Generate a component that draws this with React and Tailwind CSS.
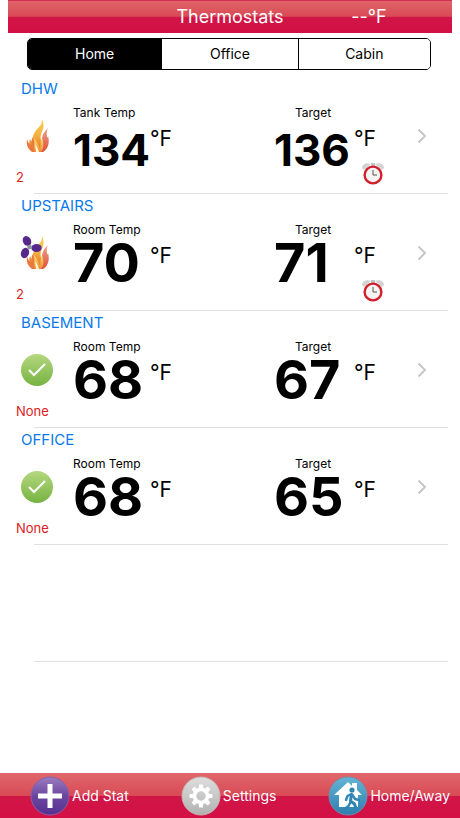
import React, { useState } from 'react';

const LOCATIONS = ['Home', 'Office', 'Cabin'];

const STATS = [
    { id: 1, name: 'DHW', label: 'Tank Temp', temp: 134, target: 136, status: 'heat', zones: '2', scheduled: true },
    { id: 2, name: 'UPSTAIRS', label: 'Room Temp', temp: 70, target: 71, status: 'heat-fan', zones: '2', scheduled: true },
    { id: 3, name: 'BASEMENT', label: 'Room Temp', temp: 68, target: 67, status: 'ok', zones: 'None', scheduled: false },
    { id: 4, name: 'OFFICE', label: 'Room Temp', temp: 68, target: 65, status: 'ok', zones: 'None', scheduled: false },
];

const Flame = () => (
    <>
        <defs>
            <linearGradient id="flameBack" x1="0" y1="0" x2="0" y2="1">
                <stop offset="0" stopColor="#f3d45c" />
                <stop offset="0.5" stopColor="#f5b03c" />
                <stop offset="1" stopColor="#e2603a" />
            </linearGradient>
            <linearGradient id="flameSide" x1="0" y1="0" x2="0" y2="1">
                <stop offset="0" stopColor="#f0a28c" />
                <stop offset="1" stopColor="#dd4f35" />
            </linearGradient>
            <linearGradient id="flameFront" x1="0" y1="0" x2="0" y2="1">
                <stop offset="0" stopColor="#fbe36a" />
                <stop offset="1" stopColor="#f08a35" />
            </linearGradient>
        </defs>
        <path d="M17 36c-3-3-5-7-3-13 1 2 2 3 3 3-1-7 2-11 6-15 2-2 3-4 3-8 3 6 1 11-1 15-1 4 0 7 1 10l-1 8z" fill="url(#flameBack)" />
        <path d="M22 36c5-4 5-8 4-13 0-4 2-7 6-11-2 4-1 6-1 9 0 1 1 0 1-1 2 7 0 13-5 16z" fill="url(#flameSide)" />
        <path d="M16 36c-4-3-6-7-5-13 1 4 3 6 5 7 0-5-1-6 1-9 0 5 3 8 5 12l2 3z" fill="#e9793f" />
        <path d="M19 36c-2-5 0-9-1-14 3 4 5 7 6 11 1-4 0-7 2-11 2 6 2 11-1 14z" fill="url(#flameFront)" />
        <path d="M20 36c0-3-1-6-1-8 2 2 3 5 4 8z" fill="#fff6d5" />
    </>
);

const StatusIcon = ({ status }) => {
    if (status === 'ok') {
        return (
            <svg viewBox="0 0 40 40" className="w-10 h-10" role="img" aria-label="Idle">
                <defs>
                    <linearGradient id="okFill" x1="0" y1="0" x2="0" y2="1">
                        <stop offset="0" stopColor="#b5d77f" />
                        <stop offset="1" stopColor="#76b342" />
                    </linearGradient>
                </defs>
                <circle cx="21" cy="20" r="16" fill="url(#okFill)" />
                <path d="M13 20l5 5 11-11" fill="none" stroke="#fff" strokeWidth="2" />
            </svg>
        );
    }
    return (
        <svg viewBox="0 0 40 40" className="w-10 h-10" role="img" aria-label="Heating">
            <Flame />
            {status === 'heat-fan' && (
                <>
                    <g fill="#56288c">
                        <ellipse cx="11" cy="8" rx="4" ry="5.200" transform="rotate(-28 11 8)" />
                        <ellipse cx="20.500" cy="15" rx="5.200" ry="4" />
                        <ellipse cx="9" cy="20" rx="4" ry="5.400" transform="rotate(20 9 20)" />
                    </g>
                    <circle cx="13.500" cy="14" r="2.300" fill="#8a929c" />
                </>
            )}
        </svg>
    );
};

const AlarmClock = () => (
    <svg viewBox="0 0 22 22" className="w-[22px] h-[22px]" role="img" aria-label="Scheduled">
        <path d="M0 5c0-4 5-6 9-4l-7 6z" fill="#d3d3d3" />
        <path d="M22 5c0-4-5-6-9-4l7 6z" fill="#d3d3d3" />
        <path d="M9 0h4v3H9z" fill="#c3c3c3" />
        <circle cx="11" cy="12" r="8.400" fill="#f6f4f2" stroke="#d0202c" strokeWidth="2.400" />
        <path d="M11 7v5h4" fill="none" stroke="#555" strokeWidth="1" />
    </svg>
);

const Chevron = () => (
    <svg viewBox="0 0 10 16" className="w-[10px] h-4" aria-hidden="true">
        <path d="M1.500 1.500L8 8l-6.500 6.500" fill="none" stroke="#c6c6c9" strokeWidth="2" />
    </svg>
);

// Three digit readings get a smaller face so they stay clear of the unit
const Reading = ({ label, value, children, target }) => (
    <div>
        <div className={`text-xs leading-4 ${target ? 'w-[78px] text-center' : ''}`}>{label}</div>
        <div className="flex">
            <div
                className={`shrink-0 font-bold ${target ? 'w-20' : 'w-[77px]'} ${value > 99 ? 'text-[44px] leading-[58px]' : 'text-[54px] leading-[50px]'}`}
            >
                {value}
            </div>
            <div className="pt-1">
                <div className="text-[21px] leading-7 font-normal">°F</div>
                {children}
            </div>
        </div>
    </div>
);

const StatRow = ({ stat }) => (
    <li className="relative h-[117px]">
        <button type="button" className="w-full h-full flex flex-col text-left">
            <h2 className="pl-[13px] text-[15px] leading-6 text-[#0a7aeb]">{stat.name}</h2>
            <div className="w-full flex pl-2 pt-1">
                <div className="w-[57px] shrink-0 pt-[11px]">
                    <StatusIcon status={stat.status} />
                    <div className="pt-[11px] text-[13px] leading-5 text-[#e02020]">{stat.zones}</div>
                </div>
                <div className="flex-1">
                    <Reading label={stat.label} value={stat.temp} />
                </div>
                <div className="w-[143px] shrink-0">
                    <Reading label="Target" value={stat.target} target>
                        {stat.scheduled && <div className="pt-[10px] pl-2"><AlarmClock /></div>}
                    </Reading>
                </div>
                <div className="w-[35px] shrink-0 pt-[23px]">
                    <Chevron />
                </div>
            </div>
        </button>
        <div className="absolute bottom-0 left-[26px] right-1 h-px bg-[#e0e0e2]" />
    </li>
);

const AddIcon = () => (
    <svg viewBox="0 0 40 40" className="w-10 h-10" aria-hidden="true">
        <defs>
            <linearGradient id="addFill" x1="0" y1="0" x2="0" y2="1">
                <stop offset="0" stopColor="#9a7cc0" />
                <stop offset="0.5" stopColor="#6b46a0" />
                <stop offset="1" stopColor="#553090" />
            </linearGradient>
        </defs>
        <circle cx="20" cy="20" r="19" fill="url(#addFill)" stroke="#8a5fa8" />
        <path d="M17.500 8h5v9.500H32v5h-9.500V32h-5v-9.500H8v-5h9.500z" fill="#fff" />
    </svg>
);

const GearIcon = () => (
    <svg viewBox="0 0 40 40" className="w-10 h-10" aria-hidden="true">
        <defs>
            <linearGradient id="gearFill" x1="0" y1="0" x2="0" y2="1">
                <stop offset="0" stopColor="#dedede" />
                <stop offset="1" stopColor="#b2b2b2" />
            </linearGradient>
        </defs>
        <circle cx="20" cy="20" r="19" fill="url(#gearFill)" stroke="#c9b4b4" />
        <g fill="#fff">
            {[0, 45, 90, 135, 180, 225, 270, 315].map(angle => (
                <path key={angle} d="M18.200 8.500h3.600l.8 6h-5.200z" transform={`rotate(${angle} 20 20)`} />
            ))}
        </g>
        <circle cx="20" cy="20" r="6.500" fill="none" stroke="#fff" strokeWidth="3.600" />
    </svg>
);

const HomeAwayIcon = () => (
    <svg viewBox="0 0 40 40" className="w-10 h-10" aria-hidden="true">
        <defs>
            <linearGradient id="awayFill" x1="0" y1="0" x2="0" y2="1">
                <stop offset="0" stopColor="#64b4d6" />
                <stop offset="1" stopColor="#2d7fae" />
            </linearGradient>
        </defs>
        <circle cx="20" cy="20" r="19" fill="url(#awayFill)" stroke="#6f8fb0" />
        <path d="M6 19L20 6l4 4V7h5v7l5 5h-4v12H11V19z" fill="#fff" />
        <g fill="none" stroke="#2f86b4" strokeWidth="2.400" strokeLinecap="round" strokeLinejoin="round">
            <path d="M23.500 18.500l-1 6.500 4 3 2 6" strokeWidth="3" />
            <path d="M22.500 26l-2 4-4 3" />
            <path d="M23.500 18l-4 2-1.500 4M24.500 19l2.500 4 4 1" />
        </g>
        <circle cx="24" cy="14" r="2.600" fill="#2f86b4" />
    </svg>
);

const ToolbarButton = ({ icon, label }) => (
    <button type="button" className="flex items-center gap-[2px] text-sm text-white">
        {icon}
        <span className="pt-px">{label}</span>
    </button>
);

const App = () => {
    const [location, setLocation] = useState('Home');

    return (
        <div className="min-h-screen flex flex-col bg-white text-black font-['Inter',sans-serif]">
            {/* Title bar */}
            <header className="mx-2 h-[33px] grid grid-cols-3 items-center border-t border-[#cf2f50] bg-[linear-gradient(#df6469_0%,#d94a56_48%,#d01647_50%,#d40f45_100%)] text-white">
                <h1 className="col-start-2 text-center text-lg">Thermostats</h1>
                <span className="text-center text-lg pr-[18px]">--°F</span>
            </header>

            {/* Location switcher */}
            <nav className="mt-[5px] ml-[27px] mr-[29px] h-8 grid grid-cols-[135fr_137fr_132fr] rounded-[5px] border border-black divide-x divide-black overflow-hidden">
                {LOCATIONS.map(name => (
                    <button
                        key={name}
                        type="button"
                        aria-pressed={location === name}
                        onClick={() => setLocation(name)}
                        className={`text-sm ${location === name ? 'bg-black text-white' : 'bg-white text-black'}`}
                    >
                        {name}
                    </button>
                ))}
            </nav>

            {/* Thermostats */}
            <main className="mx-2 pt-[7px] flex-1">
                <ul>
                    {STATS.map(stat => (
                        <StatRow key={stat.id} stat={stat} />
                    ))}
                    <li className="relative h-[117px]" aria-hidden="true">
                        <div className="absolute bottom-0 left-[26px] right-1 h-px bg-[#e0e0e2]" />
                    </li>
                </ul>
            </main>

            {/* Toolbar */}
            <footer className="h-[45px] flex items-center justify-between pl-[30px] pr-2.5 bg-[linear-gradient(#e0686c_0%,#d94a56_50%,#d01647_52%,#d40f45_100%)]">
                <ToolbarButton icon={<AddIcon />} label="Add Stat" />
                <ToolbarButton icon={<GearIcon />} label="Settings" />
                <ToolbarButton icon={<HomeAwayIcon />} label="Home/Away" />
            </footer>
        </div>
    );
};

export default App;
